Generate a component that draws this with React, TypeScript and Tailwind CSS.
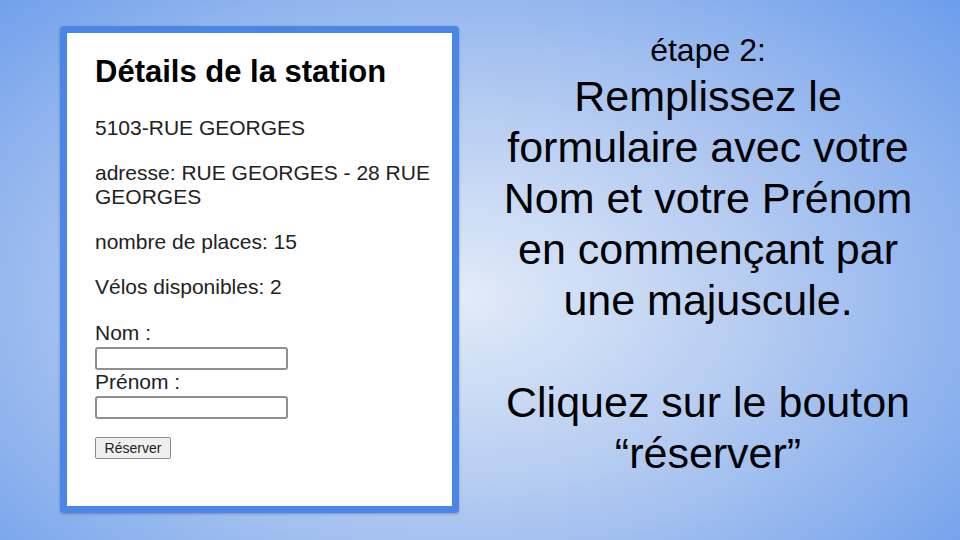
export default function App() {
  return (
    <div className="flex h-[540px] w-[960px] overflow-hidden bg-[radial-gradient(ellipse_70%_80%_at_48%_55%,#e1ebf9_0%,#b4cbf1_45%,#6d9eeb_100%)] font-['Liberation_Sans',Arial,sans-serif]">
      <div className="w-[480px] shrink-0 pl-[60px] pt-[26px]">
        <StationCard />
      </div>
      <div className="w-[456px] shrink-0 pt-[32px] text-center text-black">
        <p className="text-[32px] leading-[37px]">étape 2:</p>
        <p className="mt-[2px] text-[43px] leading-[51px]">
          Remplissez le
          <br />
          formulaire avec votre
          <br />
          Nom et votre Prénom
          <br />
          en commençant par
          <br />
          une majuscule.
          <br />
          <br />
          Cliquez sur le bouton
          <br />
          “réserver”
        </p>
      </div>
    </div>
  );
}

function StationCard() {
  return (
    <div className="h-[487px] w-[399px] rounded-[4px] border-[7px] border-[#4a86e8] bg-white pl-[28px] pr-[20px] pt-[21px] text-[21px] leading-[24px] text-[#222] shadow-[0_1px_3px_rgba(0,0,0,0.25)]">
      <h2 className="text-[31px] font-bold leading-[36px] text-black">Détails de la station</h2>
      <p className="mt-[26px]">5103-RUE GEORGES</p>
      <p className="mt-[21px]">adresse: RUE GEORGES - 28 RUE GEORGES</p>
      <p className="mt-[21px]">nombre de places: 15</p>
      <p className="mt-[21px]">Vélos disponibles: 2</p>
      <form className="mt-[22px]" onSubmit={(e) => e.preventDefault()}>
        <label className="block" htmlFor="nom">Nom :</label>
        <input
          id="nom"
          type="text"
          className="mt-[2px] block h-[23px] w-[193px] rounded-[3px] border-2 border-[#8f8f8f] bg-white"
        />
        <label className="block" htmlFor="prenom">Prénom :</label>
        <input
          id="prenom"
          type="text"
          className="mt-[2px] block h-[23px] w-[193px] rounded-[3px] border-2 border-[#8f8f8f] bg-white"
        />
        <button
          type="submit"
          className="mt-[18px] block h-[22px] w-[76px] rounded-[2px] border border-[#8a8a8a] bg-[#efefef] text-[14px] leading-[18px] text-[#222]"
        >
          Réserver
        </button>
      </form>
    </div>
  );
}
